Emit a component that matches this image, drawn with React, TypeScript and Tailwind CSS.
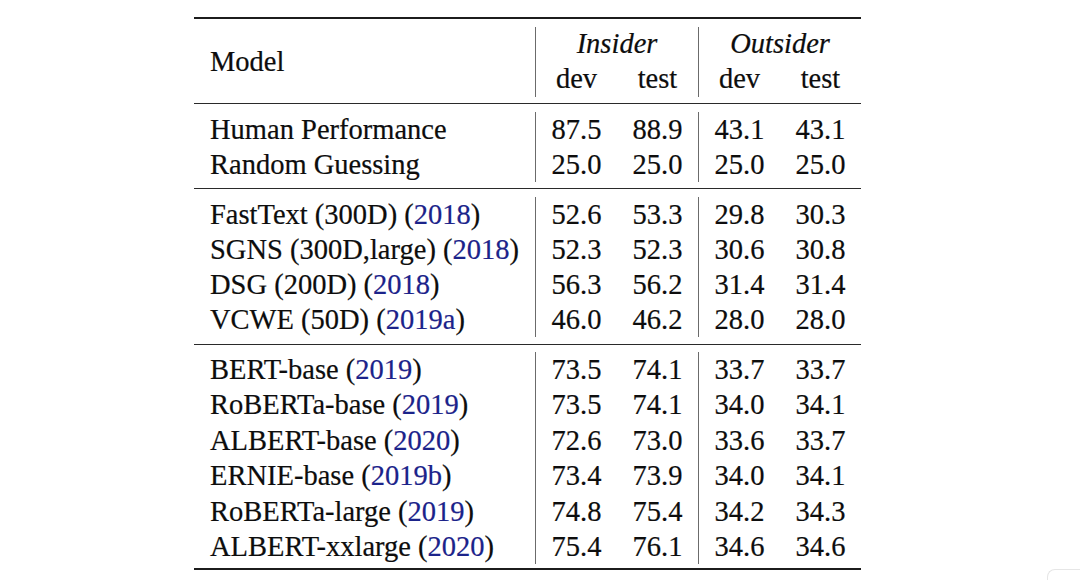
import React from 'react';

type Row = { model: string; cite?: string; vals: [string, string, string, string] };

const basics: Row[] = [
  { model: 'Human Performance', vals: ['87.5', '88.9', '43.1', '43.1'] },
  { model: 'Random Guessing', vals: ['25.0', '25.0', '25.0', '25.0'] },
];

const embeddings: Row[] = [
  { model: 'FastText (300D)', cite: '2018', vals: ['52.6', '53.3', '29.8', '30.3'] },
  { model: 'SGNS (300D,large)', cite: '2018', vals: ['52.3', '52.3', '30.6', '30.8'] },
  { model: 'DSG (200D)', cite: '2018', vals: ['56.3', '56.2', '31.4', '31.4'] },
  { model: 'VCWE (50D)', cite: '2019a', vals: ['46.0', '46.2', '28.0', '28.0'] },
];

const pretrained: Row[] = [
  { model: 'BERT-base', cite: '2019', vals: ['73.5', '74.1', '33.7', '33.7'] },
  { model: 'RoBERTa-base', cite: '2019', vals: ['73.5', '74.1', '34.0', '34.1'] },
  { model: 'ALBERT-base', cite: '2020', vals: ['72.6', '73.0', '33.6', '33.7'] },
  { model: 'ERNIE-base', cite: '2019b', vals: ['73.4', '73.9', '34.0', '34.1'] },
  { model: 'RoBERTa-large', cite: '2019', vals: ['74.8', '75.4', '34.2', '34.3'] },
  { model: 'ALBERT-xxlarge', cite: '2020', vals: ['75.4', '76.1', '34.6', '34.6'] },
];

function Section({ rows, rowH, pad }: { rows: Row[]; rowH: string; pad: string }) {
  return (
    <div className={pad}>
      <div className="flex">
        {/* model names */}
        <div className="w-[341px] pl-[16px]">
          {rows.map((r) => (
            <div key={r.model} className={`${rowH} whitespace-nowrap`}>
              {r.model}
              {r.cite && (
                <>
                  {' ('}
                  <span className="text-[#1b238a]">{r.cite}</span>
                  {')'}
                </>
              )}
            </div>
          ))}
        </div>
        {/* Insider */}
        <div className="w-[163px] border-l border-[#6b6b6b] grid grid-cols-2 text-center">
          {rows.map((r) => (
            <React.Fragment key={r.model}>
              <div className={rowH}>{r.vals[0]}</div>
              <div className={rowH}>{r.vals[1]}</div>
            </React.Fragment>
          ))}
        </div>
        {/* Outsider */}
        <div className="w-[163px] border-l border-[#6b6b6b] grid grid-cols-2 text-center">
          {rows.map((r) => (
            <React.Fragment key={r.model}>
              <div className={rowH}>{r.vals[2]}</div>
              <div className={rowH}>{r.vals[3]}</div>
            </React.Fragment>
          ))}
        </div>
      </div>
    </div>
  );
}

export default function App() {
  return (
    <div className="relative w-[1080px] h-[580px] bg-white overflow-hidden text-[#0d0d0d] [-webkit-text-stroke:0.2px] font-['Liberation_Serif','Times_New_Roman',serif] text-[28.5px]">
      <div className="ml-[194px] w-[667px] pt-[17px]">
        {/* top rule */}
        <div className="h-[2px] bg-[#1c1c1c]" />

        {/* header */}
        <div className="pt-[8px] pb-[6px]">
          <div className="flex">
            <div className="w-[341px] pl-[16px] h-[70px] flex items-center">Model</div>
            <div className="w-[163px] border-l border-[#6b6b6b] text-center">
              <div className="leading-[34px] italic">Insider</div>
              <div className="grid grid-cols-2 leading-[34px] pt-[1px]">
                <div>dev</div>
                <div>test</div>
              </div>
            </div>
            <div className="w-[163px] border-l border-[#6b6b6b] text-center">
              <div className="leading-[34px] italic">Outsider</div>
              <div className="grid grid-cols-2 leading-[34px] pt-[1px]">
                <div>dev</div>
                <div>test</div>
              </div>
            </div>
          </div>
        </div>
        <div className="h-[1px] bg-[#2a2a2a]" />

        <Section rows={basics} rowH="h-[35px] leading-[35px]" pad="pt-[8px] pb-[6px]" />
        <div className="h-[1px] bg-[#2a2a2a]" />

        <Section rows={embeddings} rowH="h-[35px] leading-[35px]" pad="pt-[8px] pb-[7px]" />
        <div className="h-[1px] bg-[#2a2a2a]" />

        <Section rows={pretrained} rowH="h-[35.4px] leading-[35.4px]" pad="pt-[7px] pb-[4px]" />
        {/* bottom rule */}
        <div className="h-[2px] bg-[#1c1c1c]" />
      </div>

      {/* faint frame corner at bottom right */}
      <div className="absolute left-[1047px] top-[569px] w-[60px] h-[40px] border-l border-t border-[#e6e6e6] rounded-tl-[8px]" />
    </div>
  );
}
